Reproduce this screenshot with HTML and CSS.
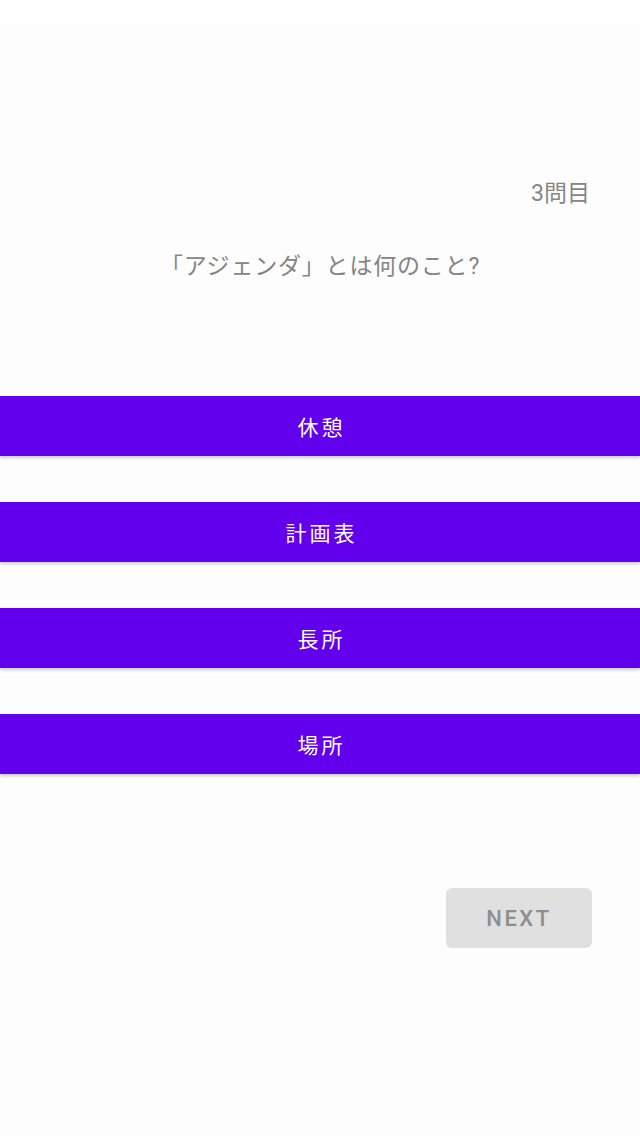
FILE: index.html
```html
<!DOCTYPE html>
<html lang="ja">

<head>
    <meta charset="UTF-8">
    <title>クイズ</title>
    <link rel="stylesheet" href="styles.css">
</head>

<body>
    <div class="status-bar"></div>
    <main class="quiz">
        <div class="quiz-count">3問目</div>
        <div class="quiz-question">「アジェンダ」とは何のこと?</div>
        <div class="answers">
            <button class="answer-button">休憩</button>
            <button class="answer-button">計画表</button>
            <button class="answer-button">長所</button>
            <button class="answer-button">場所</button>
        </div>
        <div class="next-row">
            <button class="next-button" disabled>NEXT</button>
        </div>
    </main>
</body>

</html>
```

FILE: styles.css
```css
body {
    margin: 0;
    padding: 0;
    height: 1136px;
    background: #fdfdfd;
    font-family: Roboto, "Noto Sans CJK JP", sans-serif;
}

.status-bar {
    height: 24px;
    background: #ffffff;
}

.quiz {
    display: flex;
    flex-direction: column;
}

.quiz-count {
    align-self: flex-end;
    margin: 156px 50px 0 0;
    height: 28px;
    line-height: 28px;
    font-size: 23px;
    color: #858585;
}

.quiz-question {
    margin-top: 44px;
    text-align: center;
    height: 30px;
    line-height: 30px;
    font-size: 23px;
    letter-spacing: 0.8px;
    color: #858585;
}

.answers {
    display: flex;
    flex-direction: column;
    gap: 46px;
    margin-top: 114px;
}

.answer-button {
    height: 60px;
    width: 100%;
    border: none;
    background: #6200ee;
    color: #ffffff;
    font-family: inherit;
    font-size: 21px;
    letter-spacing: 3px;
    text-indent: 3px;
    box-shadow: 0 2px 3px rgba(0, 0, 0, 0.2);
}

.next-row {
    display: flex;
    justify-content: flex-end;
    margin: 114px 48px 0 0;
}

.next-button {
    width: 146px;
    height: 60px;
    border: none;
    border-radius: 6px;
    background: #e0e0e0;
    color: #8e8e8e;
    font-family: inherit;
    font-size: 22px;
    font-weight: 500;
    letter-spacing: 2.5px;
}
```
